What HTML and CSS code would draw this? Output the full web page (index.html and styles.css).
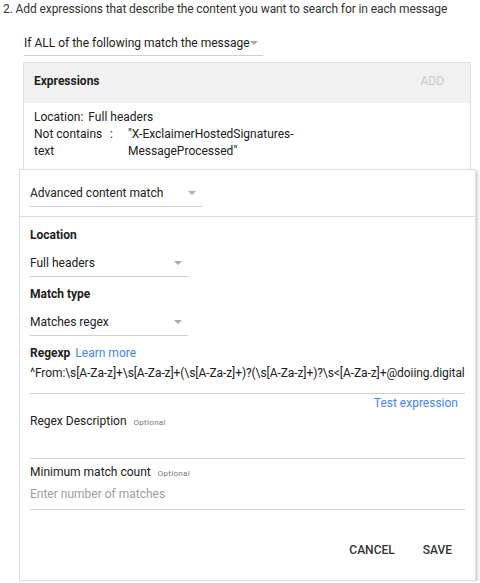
FILE: index.html
```html
<!DOCTYPE html>
<html lang="en">
<head>
    <meta charset="UTF-8">
    <meta name="viewport" content="width=device-width, initial-scale=1.0">
    <title>Add expressions</title>
    <link rel="stylesheet" href="styles.css">
</head>
<body>
    <div class="step">2. Add expressions that describe the content you want to search for in each message</div>

    <div class="select match-all">
        <span>If ALL of the following match the message</span>
        <span class="arrow"></span>
    </div>

    <div class="expressions">
        <div class="expressions-head">
            <span class="title">Expressions</span>
            <span class="add">ADD</span>
        </div>
        <div class="expressions-body">
            <div class="row"><span>Location:</span><span class="location-value">Full headers</span></div>
            <div class="pair">
                <span class="pair-label">Not contains text</span>
                <span class="pair-colon">:</span>
                <span class="pair-value">"X-ExclaimerHostedSignatures-MessageProcessed"</span>
            </div>
        </div>
    </div>

    <div class="dialog">
        <div class="dialog-top">
            <div class="select type-select">
                <span>Advanced content match</span>
                <span class="arrow"></span>
            </div>
        </div>

        <div class="dialog-body">
            <div class="label">Location</div>
            <div class="select field-select">
                <span>Full headers</span>
                <span class="arrow"></span>
            </div>

            <div class="label">Match type</div>
            <div class="select field-select">
                <span>Matches regex</span>
                <span class="arrow"></span>
            </div>

            <div class="label">Regexp <a class="link" href="#">Learn more</a></div>
            <div class="input regex-input">^From:\s[A-Za-z]+\s[A-Za-z]+(\s[A-Za-z]+)?(\s[A-Za-z]+)?\s&lt;[A-Za-z]+@doiing.digital&gt;</div>
            <div class="test"><a class="link" href="#">Test expression</a></div>

            <div class="label plain">Regex Description <span class="optional">Optional</span></div>
            <div class="input empty-input"></div>

            <div class="label plain">Minimum match count <span class="optional">Optional</span></div>
            <div class="input count-input">Enter number of matches</div>
        </div>

        <div class="actions">
            <button>CANCEL</button>
            <button>SAVE</button>
        </div>
    </div>
</body>
</html>
```

FILE: styles.css
```css
body {
    margin: 0;
    font-family: Roboto, Arial, sans-serif;
    font-size: 12px;
    color: #212121;
    background: white;
}
.step {
    padding-left: 3px;
    line-height: 18px;
    color: #333;
    white-space: nowrap;
    letter-spacing: -0.1px;
}
.select {
    display: flex;
    align-items: center;
    justify-content: space-between;
    height: 27px;
    border-bottom: 1px solid #d0d0d0;
    box-sizing: border-box;
    white-space: nowrap;
}
.arrow {
    width: 0;
    height: 0;
    border-left: 4px solid transparent;
    border-right: 4px solid transparent;
    border-top: 4px solid #aaa;
    margin-right: 6px;
}
.match-all {
    width: 239px;
    margin: 11px 0 6px 24px;
    padding-top: 2px;
}
.match-all .arrow {
    margin-right: 5px;
}
.expressions {
    margin-left: 23px;
    width: 448px;
    border: 1px solid #e0e0e0;
    border-bottom: none;
    box-sizing: border-box;
}
.expressions-head {
    display: flex;
    justify-content: space-between;
    align-items: flex-start;
    height: 40px;
    box-sizing: border-box;
    padding: 11px 26px 0 10px;
    line-height: 15px;
    background: #f1f1f1;
}
.title {
    font-weight: bold;
}
.add {
    color: #c8c8c8;
}
.expressions-body {
    padding: 6px 10px 9px;
    line-height: 17px;
}
.location-value {
    margin-left: 5px;
}
.pair {
    display: flex;
}
.pair-label {
    width: 72px;
}
.pair-colon {
    width: 18px;
    padding-left: 4px;
}
.pair-value {
    width: 170px;
}
.dialog {
    margin-left: 19px;
    width: 457px;
    height: 412px;
    border: 1px solid #dcdcdc;
    box-sizing: border-box;
    box-shadow: 2px 2px 3px rgba(0,0,0,0.18);
    display: flex;
    flex-direction: column;
}
.dialog-top {
    padding: 10px 10px 9px;
    border-bottom: 1px solid #dcdcdc;
}
.type-select {
    width: 172px;
}
.dialog-body {
    padding: 9px 10px 0;
}
.label {
    line-height: 18px;
    font-weight: bold;
    white-space: nowrap;
}
.label.plain {
    font-weight: normal;
}
.field-select {
    width: 158px;
    height: 28px;
    margin: 5px 0 8px;
}
.link {
    font-weight: normal;
    color: #4285f4;
    text-decoration: none;
    margin-left: 2px;
}
.optional {
    font-size: 8px;
    color: #777;
    margin-left: 4px;
    letter-spacing: 0.3px;
}
.input {
    border-bottom: 1px solid #d0d0d0;
    line-height: 18px;
    white-space: nowrap;
    overflow: hidden;
}
.regex-input {
    padding: 2px 0 11px;
    letter-spacing: -0.08px;
}
.test {
    text-align: right;
    line-height: 18px;
    padding-right: 7px;
}
.empty-input {
    height: 26px;
    margin-bottom: 4px;
}
.count-input {
    padding: 2px 0 6px;
    color: #9e9e9e;
}
.actions {
    margin-top: auto;
    display: flex;
    justify-content: flex-end;
    padding: 0 9px 15px 0;
}
button {
    font-family: Roboto, Arial, sans-serif;
    font-size: 12px;
    font-weight: 500;
    color: #333;
    background: none;
    border: none;
    padding: 8px 14px;
    cursor: pointer;
}
```
